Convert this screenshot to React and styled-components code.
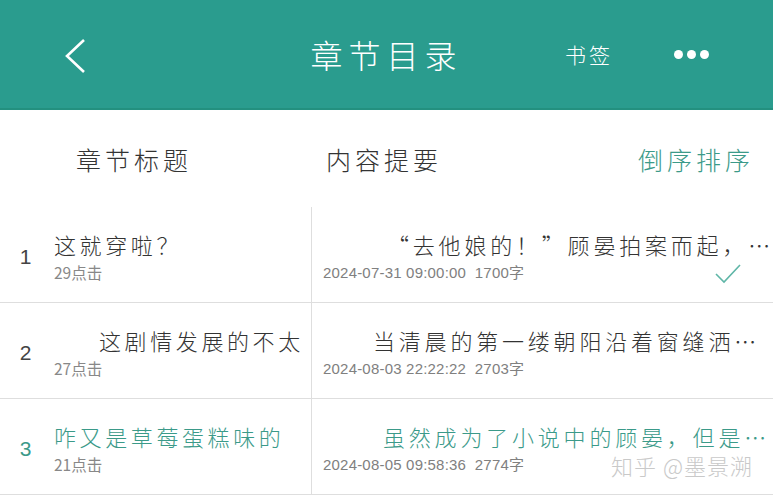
import React from 'react';
import styled, { createGlobalStyle } from 'styled-components';

// --- palette ---
const teal = '#2a9c8e';
const tealText = '#3b9a89';
const line = '#dedede';

const GlobalStyle = createGlobalStyle`
  body {
    margin: 0;
    background: #fff;
    font-family: "Noto Sans CJK SC", "Liberation Sans", sans-serif;
  }
`;

// --- styled components ---
const Page = styled.div`
  width: 773px;
  height: 500px;
  overflow: hidden;
  background: #fff;
`;

const Header = styled.header`
  display: grid;
  grid-template-columns: 1fr auto 1fr;
  align-items: center;
  height: 108px;
  background: ${teal};
  border-bottom: 2px solid #23907f;
  color: #fff;
`;

const Back = styled.div`
  display: flex;
  align-items: center;
  padding: 4px 0 0 63px;
`;

const Title = styled.h1`
  margin: 0;
  font-size: 32px;
  font-weight: 300;
  letter-spacing: 6px;
`;

const Actions = styled.div`
  display: flex;
  align-items: center;
  justify-content: flex-end;
  gap: 61px;
  padding-right: 64px;
`;

const Bookmark = styled.span`
  font-size: 21px;
  font-weight: 300;
  letter-spacing: 3px;
`;

const Dots = styled.span`
  display: flex;
  gap: 4px;

  i {
    width: 9px;
    height: 9px;
    border-radius: 50%;
    background: #fff;
  }
`;

const Columns = styled.div`
  display: grid;
  grid-template-columns: 312px 1fr;
  align-items: center;
  height: 97px;
`;

const Label = styled.span`
  font-size: 25px;
  font-weight: 300;
  letter-spacing: 4px;
  color: ${(p) => (p.$accent ? tealText : '#333')};
`;

const LeftLabel = styled.div`
  padding-left: 76px;
`;

const RightLabels = styled.div`
  display: flex;
  justify-content: space-between;
  padding: 0 19px 0 14px;
`;

const Row = styled.div`
  display: grid;
  grid-template-columns: 312px 1fr;
  height: 95px;
  border-bottom: 1px solid ${line};
`;

const Left = styled.div`
  display: flex;
  align-items: center;
  min-width: 0;
  padding-top: 4px;
  border-right: 1px solid ${line};
  color: ${(p) => (p.$active ? tealText : '#333')};
`;

const Num = styled.span`
  flex: 0 0 51px;
  text-align: center;
  padding-right: 3px;
  font-family: "Liberation Sans", sans-serif;
  font-size: 21px;
  color: ${(p) => (p.$active ? tealText : '#444')};
`;

const Stack = styled.div`
  display: flex;
  flex-direction: column;
  min-width: 0;
  flex: 1;
`;

const Heading = styled.div`
  font-size: 22px;
  font-weight: 300;
  line-height: 30px;
  letter-spacing: 3.6px;
  white-space: nowrap;
  padding-left: ${(p) => p.$indent || 0}px;
  color: inherit;
`;

const Clicks = styled.div`
  font-size: 15.5px;
  line-height: 26px;
  color: #888;
`;

const Right = styled.div`
  display: flex;
  flex-direction: column;
  justify-content: center;
  min-width: 0;
  padding: 4px 0 0 11px;
`;

const Summary = styled.div`
  font-size: 22px;
  font-weight: 300;
  line-height: 30px;
  letter-spacing: 3.8px;
  white-space: nowrap;
  overflow: hidden;
  padding-left: ${(p) => p.$indent}px;
  color: ${(p) => (p.$active ? tealText : '#333')};
`;

const Meta = styled.div`
  display: flex;
  align-items: center;
  height: 26px;
  font-family: "Liberation Sans", "Noto Sans CJK SC", sans-serif;
  font-size: 15px;
  letter-spacing: 0.2px;
  color: #808080;
  white-space: pre;
`;

const Check = styled.svg`
  margin-left: auto;
  margin-right: 32px;
  margin-top: 4px;
`;

const Watermark = styled.span`
  margin-left: auto;
  margin-right: 20px;
  margin-top: 2px;
  font-family: "Noto Sans CJK SC", sans-serif;
  font-size: 22px;
  line-height: 22px;
  font-weight: 300;
  letter-spacing: 1px;
  color: #c9c9c9;
`;

// --- data ---
const chapters = [
  {
    num: 1,
    title: '这就穿啦？',
    clicks: '29点击',
    summary: '“去他娘的！”顾晏拍案而起，…',
    indent: 64,
    date: '2024-07-31 09:00:00  1700字',
    read: true,
  },
  {
    num: 2,
    title: '这剧情发展的不太',
    titleIndent: 45,
    clicks: '27点击',
    summary: '当清晨的第一缕朝阳沿着窗缝洒…',
    indent: 50,
    date: '2024-08-03 22:22:22  2703字',
  },
  {
    num: 3,
    title: '咋又是草莓蛋糕味的',
    clicks: '21点击',
    summary: '虽然成为了小说中的顾晏，但是…',
    indent: 60,
    date: '2024-08-05 09:58:36  2774字',
    active: true,
    mark: true,
  },
];

// --- components ---
function App() {
  return (
    <Page>
      <GlobalStyle />
      <Header>
        <Back>
          <svg width="24" height="36" viewBox="0 0 24 36">
            <path d="M21 2 L4 18 L21 34" fill="none" stroke="#fff" strokeWidth="2.6" />
          </svg>
        </Back>
        <Title>章节目录</Title>
        <Actions>
          <Bookmark>书签</Bookmark>
          <Dots>
            <i />
            <i />
            <i />
          </Dots>
        </Actions>
      </Header>

      <Columns>
        <LeftLabel>
          <Label>章节标题</Label>
        </LeftLabel>
        <RightLabels>
          <Label>内容提要</Label>
          <Label $accent>倒序排序</Label>
        </RightLabels>
      </Columns>

      {chapters.map((c) => (
        <Row key={c.num}>
          <Left $active={c.active}>
            <Num $active={c.active}>{c.num}</Num>
            <Stack>
              <Heading $indent={c.titleIndent}>{c.title}</Heading>
              <Clicks>{c.clicks}</Clicks>
            </Stack>
          </Left>
          <Right>
            <Summary $indent={c.indent} $active={c.active}>
              {c.summary}
            </Summary>
            <Meta>
              {c.date}
              {c.read && (
                <Check width="26" height="20" viewBox="0 0 26 20">
                  <path d="M1 10 L9 18 L25 1" fill="none" stroke="#5fb6a7" strokeWidth="1.6" />
                </Check>
              )}
              {c.mark && <Watermark>知乎 @墨景溯</Watermark>}
            </Meta>
          </Right>
        </Row>
      ))}
    </Page>
  );
}

export default App;
